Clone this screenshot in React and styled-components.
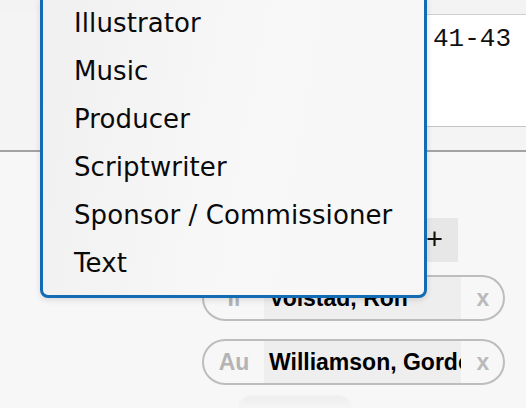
import styled, { createGlobalStyle } from "styled-components";

const Global = createGlobalStyle`
  body {
    margin: 0;
    background: #f7f7f7;
  }
`;

const Page = styled.div`
  position: relative;
  width: 526px;
  height: 408px;
  overflow: hidden;
  background: #f7f7f7;
  font-family: "Liberation Sans", Arial, sans-serif;
`;

const TopStrip = styled.div`
  height: 14px;
  background: #f3f3f3;
`;

const FieldRow = styled.div`
  display: flex;
  background: #f4f4f4;
  padding-bottom: 23px;
  border-bottom: 2px solid #a3a3a3;
`;

const FieldLabel = styled.div`
  width: 420px;
  flex: none;
`;

const FieldValue = styled.div`
  flex: 1;
  height: 113px;
  box-sizing: border-box;
  background: #fff;
  border-top: 1px solid #cfcfcf;
  border-bottom: 1px solid #c4c4c4;
  padding: 9px 0 0 13px;
  font-family: "Liberation Mono", "DejaVu Sans Mono", monospace;
  font-size: 26px;
  line-height: 30px;
  color: #111;
`;

const Contributors = styled.div`
  display: flex;
  flex-direction: column;
  width: 303px;
  margin-left: 202px;
  padding-top: 66px;
`;

const AddButton = styled.button`
  align-self: flex-end;
  margin-right: 47px;
  width: 70px;
  height: 44px;
  border: none;
  background: #e7e7e7;
  padding: 0 15px 2px 0;
  text-align: right;
  font-family: "Liberation Sans", Arial, sans-serif;
  font-size: 29px;
  font-weight: 300;
  line-height: 40px;
  color: #111;
`;

const PillList = styled.div`
  display: flex;
  flex-direction: column;
  gap: 18px;
  margin-top: 13px;
`;

const Pill = styled.div`
  display: flex;
  align-items: stretch;
  height: 42px;
  border: 2px solid #bdbdbd;
  border-radius: 23px;
  overflow: hidden;
  background: #f7f7f7;
`;

const Role = styled.div`
  width: 60px;
  flex: none;
  display: flex;
  align-items: center;
  justify-content: center;
  font-weight: bold;
  font-size: 23px;
  color: #b4b4b4;
`;

const Name = styled.div`
  width: 197px;
  flex: none;
  display: flex;
  align-items: center;
  padding-left: 5px;
  box-sizing: border-box;
  background: #eeeeee;
  overflow: hidden;
  white-space: nowrap;
  font-weight: bold;
  font-size: 23px;
  color: #000;
`;

const Remove = styled.div`
  flex: 1;
  display: flex;
  align-items: center;
  justify-content: center;
  padding-left: 2px;
  font-weight: bold;
  font-size: 23px;
  color: #bababa;
`;

const BottomButton = styled.div`
  width: 110px;
  height: 30px;
  margin: 12px 0 0 38px;
  border-radius: 10px 10px 0 0;
  background: linear-gradient(#eeeeee, #fafafa 60%);
  box-shadow: 0 -1px 3px rgba(0, 0, 0, 0.05);
`;

const Menu = styled.ul`
  position: absolute;
  left: 40px;
  top: -4px;
  width: 387px;
  margin: 0;
  padding: 0 0 8px 31px;
  box-sizing: border-box;
  list-style: none;
  border: 3px solid #136bb3;
  border-radius: 0 0 8px 8px;
  background: linear-gradient(100deg, #f0f0f0, #f8f8f8 55%, #f6f6f6);
  box-shadow: 0 2px 6px rgba(0, 0, 0, 0.12);
`;

const MenuItem = styled.li`
  height: 48px;
  line-height: 48px;
  font-family: "DejaVu Sans", "Lucida Grande", sans-serif;
  font-size: 26px;
  letter-spacing: 0.1px;
  color: #0a0a0a;
  white-space: nowrap;
`;

const roles = [
  "Illustrator",
  "Music",
  "Producer",
  "Scriptwriter",
  "Sponsor / Commissioner",
  "Text",
];

const people = [
  { role: "Il", name: "Volstad, Ron" },
  { role: "Au", name: "Williamson, Gordon" },
];

export default function App() {
  return (
    <>
      <Global />
      <Page>
        <TopStrip />
        <FieldRow>
          <FieldLabel />
          <FieldValue>41-43</FieldValue>
        </FieldRow>
        <Contributors>
          <AddButton>+</AddButton>
          <PillList>
            {people.map((p) => (
              <Pill key={p.name}>
                <Role>{p.role}</Role>
                <Name>{p.name}</Name>
                <Remove>x</Remove>
              </Pill>
            ))}
          </PillList>
          <BottomButton />
        </Contributors>
        <Menu>
          {roles.map((r) => (
            <MenuItem key={r}>{r}</MenuItem>
          ))}
        </Menu>
      </Page>
    </>
  );
}
